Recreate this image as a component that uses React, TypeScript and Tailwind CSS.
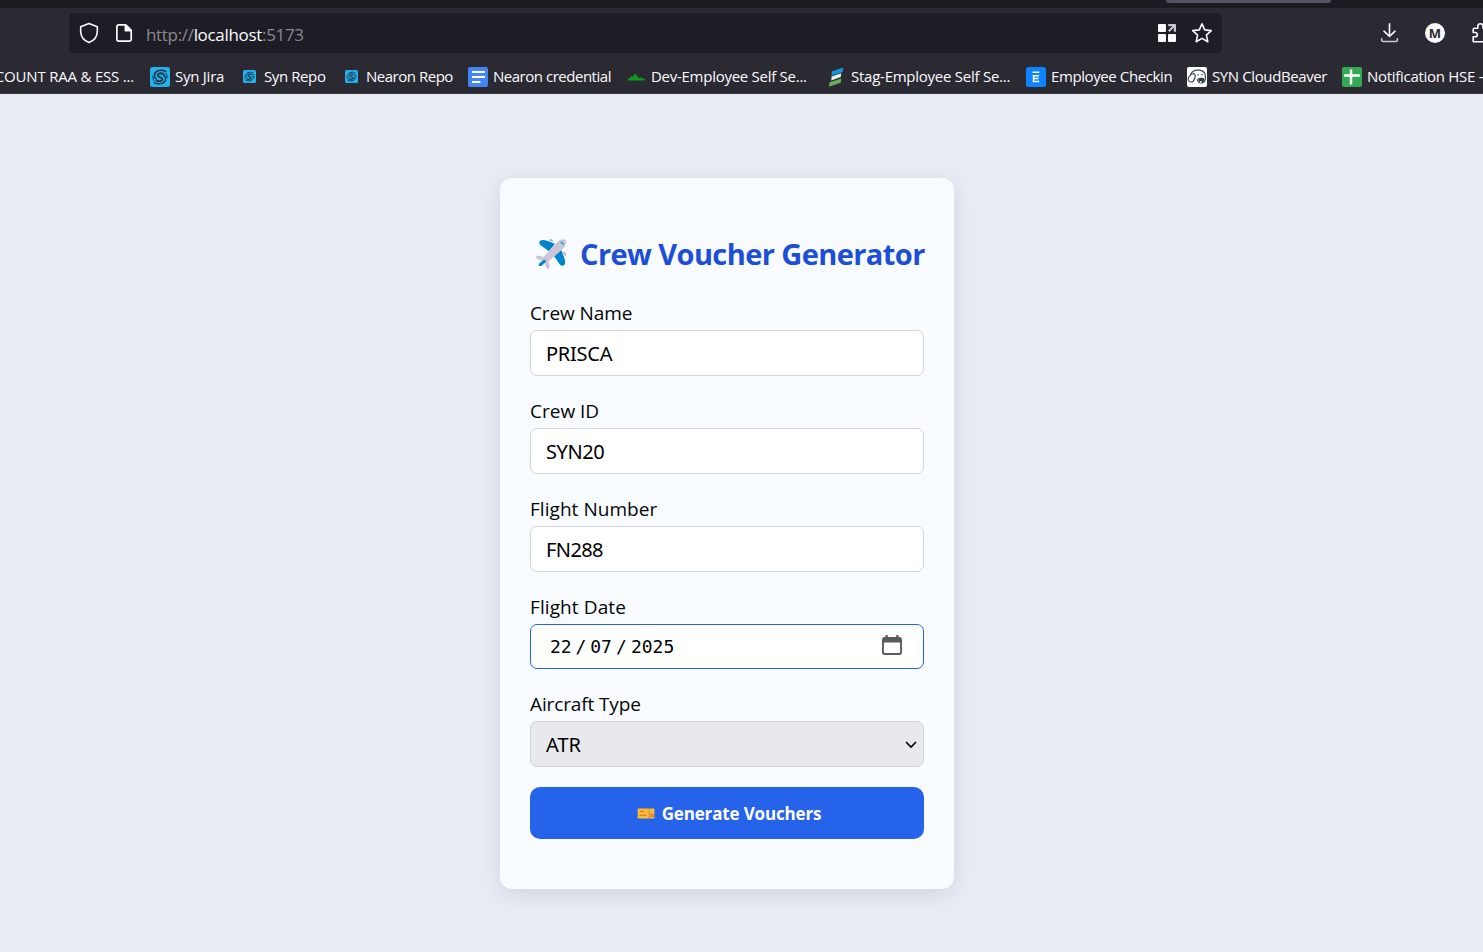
import type { ReactNode } from 'react';

function SwirlIcon({ className }: { className: string }) {
  return (
    <svg viewBox="0 0 20 20" className={className}>
      <rect width="20" height="20" rx="2.5" fill="#25b0ea" />
      <g fill="none" stroke="#17384c" strokeLinecap="round">
        <path d="M13.400 6.900C11 5.800 7.700 6.300 7.500 8.200c-.2 1.900 5 1.900 5 4.100 0 2-3.600 2.500-6 1.400" strokeWidth="1.900" />
        <path d="M15.800 4.700C12 2.300 5.800 3.200 4.500 7.300c-.6 2.200.2 3.800 1.900 4.900" strokeWidth="1.500" />
        <path d="M4.200 15.500c3.800 2.400 10 1.500 11.300-2.600.6-2.200-.2-3.800-1.900-4.900" strokeWidth="1.500" />
        <path d="M2.800 9.500c-.2 2 .4 3.400 1.500 4.300M17.200 10.700c.2-2-.4-3.400-1.500-4.300" strokeWidth="1" />
      </g>
    </svg>
  );
}

function DocsIcon() {
  return (
    <svg viewBox="0 0 20 20" className="size-5">
      <rect width="20" height="20" rx="2" fill="#4285f4" />
      <path d="M4 5h13M4 10h13M4 15h8.500" stroke="#fff" strokeWidth="2.200" />
    </svg>
  );
}

function HillIcon() {
  return (
    <svg viewBox="0 0 20 20" className="size-5">
      <path d="M1 13.500 5 9.300l1.800.5L9.200 6.400l3.800 4.800 1.600-1 2.800 1.400 1.600.6v1.300z" fill="#0c9a1c" />
    </svg>
  );
}

function StripesIcon() {
  return (
    <svg viewBox="0 0 20 20" className="size-5">
      <path d="M6 4.300 17.300.4 16.800 5 5.400 8.700z" fill="#1296db" />
      <path d="m5.600 9.400 9.600-3.200-.4 3.900-9.600 3.300z" fill="#e8f0f0" />
      <path d="M3.600 15.200 15.300 11.400l-.5 4.300L3 19.800z" fill="#62b152" />
    </svg>
  );
}

function LetterEIcon() {
  return (
    <svg viewBox="0 0 20 20" className="size-5">
      <rect width="20" height="20" rx="2.500" fill="#0a85ff" />
      <path d="M6.500 5.200h6.800M7.600 8.500v6M6.600 8.800h6.500M7 11.500h5.500M6.600 14.500h6.700" stroke="#fff" strokeWidth="1.500" fill="none" />
    </svg>
  );
}

function BeaverIcon() {
  return (
    <svg viewBox="0 0 20 20" className="size-5">
      <rect width="20" height="20" rx="2" fill="#fff" />
      <g fill="none" stroke="#34495a" strokeWidth="1.200" strokeLinecap="round">
        <path d="M3.500 7.500C5 4 9 2.800 12.500 3.200c4 .5 6 3.500 6 7 0 3-1.500 5.500-4 5.800-2 .2-4-1.500-4.200-3.500" />
        <path d="M6.500 6.500c2 .5 2 3 1.200 5-.8 2.300-2.200 3.700-4.200 3.500-2.500-.3-2.800-3.500-1.500-5.500.9-1.400 2.500-2.500 4.500-3" />
      </g>
      <path d="M11 11.500c1.500-1 5-1 6.500.3l-.8 3.200c-1 1.800-4 1.600-4.700-.2z" fill="#2c3e50" />
      <path d="M12.600 14.200h2.200v1.600h-1.800z" fill="#fff" />
      <circle cx="11" cy="7.800" r=".8" fill="#34495a" />
      <circle cx="15" cy="7.500" r=".8" fill="#34495a" />
    </svg>
  );
}

function SheetsIcon() {
  return (
    <svg viewBox="0 0 20 20" className="size-5">
      <rect width="20" height="20" rx="2" fill="#34a853" />
      <path d="M9 2.500v15M2.200 8.500h15.600" stroke="#fff" strokeWidth="2.500" />
    </svg>
  );
}

function Bookmark({ icon, label, box, text }: { icon: ReactNode; label: string; box: string; text: string }) {
  return (
    <div className={`flex h-6 shrink-0 items-center gap-[5px] ${box}`}>
      <span className="flex size-5 shrink-0 items-center justify-center">{icon}</span>
      <span className={`whitespace-nowrap pb-[2px] text-[15px] leading-[22px] ${text}`}>{label}</span>
    </div>
  );
}

function BrowserChrome() {
  return (
    <header className="flex h-[94px] flex-col overflow-hidden border-b border-[#3b3940] bg-[#2b2a33] text-[#fbfbfe]">
      <div className="flex h-2 shrink-0 bg-[#1c1b22] pl-[1166px]">
        <div className="h-[3px] w-[165px] rounded-b-[3px] bg-[#545361]" />
      </div>
      <div className="flex h-[50px] shrink-0 items-center pl-[69px]">
        <div className="flex h-10 w-[1153px] shrink-0 items-center rounded-[5px] bg-[#1e1d25] px-[9px]">
          <svg viewBox="0 0 22 22" className="size-[22px]" fill="none" stroke="#fbfbfe" strokeWidth="1.600" strokeLinejoin="round">
            <path d="M11 1.500 19.300 4.800v4.600c0 5-3.300 9-8.300 11.100C6 18.400 2.700 14.400 2.700 9.400V4.800z" />
          </svg>
          <svg viewBox="0 0 20 20" className="ml-[14px] size-5" fill="none" stroke="#fbfbfe" strokeWidth="1.700" strokeLinejoin="round">
            <path d="M4.500 1.900h7.200l5.500 5.400v9.200c0 .9-.7 1.600-1.600 1.600H4.500c-.9 0-1.600-.7-1.600-1.600v-13c0-.9.700-1.600 1.600-1.600z" />
            <path d="M11.400 2v5.600h5.600z" fill="#fbfbfe" />
          </svg>
          <div className="ml-3 flex items-center whitespace-pre pt-[3px] text-[17px] leading-6 tracking-[-0.32px] text-[#8a8990]">
            <span>http://</span>
            <span className="text-[#fbfbfe]">localhost</span>
            <span>:5173</span>
          </div>
          <svg viewBox="0 0 20 20" className="ml-auto size-5" fill="#fbfbfe">
            <rect x="1" y="1" width="8" height="8" rx="1" />
            <rect x="1" y="11" width="8" height="8" rx="1" />
            <rect x="11" y="11" width="8" height="8" rx="1" />
            <path d="M11.200 1H18c.6 0 1 .4 1 1v6.800h-2.200V4.700l-4.300 4.200-1.500-1.500 4.200-4.200h-4z" fill="#c6c6cc" />
          </svg>
          <svg viewBox="0 0 22 22" className="ml-[14px] size-[22px]" fill="none" stroke="#fbfbfe" strokeWidth="1.600" strokeLinejoin="round">
            <path d="m11 1.800 2.700 6.100 6.600.7-4.900 4.500 1.400 6.600-5.800-3.300-5.800 3.300 1.400-6.600L1.700 8.600l6.600-.7z" />
          </svg>
        </div>
        <svg viewBox="0 0 20 20" className="ml-[158px] size-5 shrink-0" fill="none" stroke="#fbfbfe" strokeWidth="1.600" strokeLinecap="round" strokeLinejoin="round">
          <path d="M9.500.9v12.400M4 8.200l5.500 5.300L15 8.200" />
          <path d="M1.700 15.800v1.200c0 .9.700 1.500 1.500 1.500h12.600c.9 0 1.600-.6 1.600-1.500v-1.200" stroke="#c9c9cf" />
        </svg>
        <div className="ml-[25px] flex size-5 shrink-0 items-center justify-center rounded-full bg-[#fbfbfe] text-[13px] font-bold leading-none text-[#2b2a33]">
          M
        </div>
        <svg viewBox="0 0 22 22" className="ml-[26px] size-[22px] shrink-0" fill="none" stroke="#fbfbfe" strokeWidth="1.600" strokeLinejoin="round">
          <path d="M2.200 19.500v-4.700h1.900c3 0 3-4.300 0-4.300H2.200V7.600c0-.8.600-1.400 1.400-1.400h3.200V4.400c0-3.600 5.200-3.600 5.200 0v1.800h4.200v13.600H2.600z" />
        </svg>
      </div>
      <div className="flex h-9 shrink-0 items-center pt-[1px]">
        <div className="flex h-6 w-[150px] shrink-0 justify-end overflow-hidden whitespace-nowrap pr-4 text-[15px] leading-[22px] tracking-[-0.2px]">
          COUNT RAA &amp; ESS ...
        </div>
        <Bookmark icon={<SwirlIcon className="size-5" />} label="Syn Jira" box="w-[89px]" text="tracking-[-0.25px]" />
        <Bookmark icon={<SwirlIcon className="size-[13px]" />} label="Syn Repo" box="w-[102px]" text="tracking-[-0.4px]" />
        <Bookmark icon={<SwirlIcon className="size-[13px]" />} label="Nearon Repo" box="w-[127px]" text="tracking-[-0.48px]" />
        <Bookmark icon={<DocsIcon />} label="Nearon credential" box="w-[158px]" text="tracking-[-0.48px]" />
        <Bookmark icon={<HillIcon />} label="Dev-Employee Self Se..." box="w-[200px]" text="tracking-[-0.27px]" />
        <Bookmark icon={<StripesIcon />} label="Stag-Employee Self Se..." box="w-[200px]" text="tracking-[-0.25px]" />
        <Bookmark icon={<LetterEIcon />} label="Employee Checkin" box="w-[161px]" text="tracking-[-0.4px]" />
        <Bookmark icon={<BeaverIcon />} label="SYN CloudBeaver" box="w-[155px]" text="tracking-[-0.39px]" />
        <Bookmark icon={<SheetsIcon />} label="Notification HSE -" box="w-[141px]" text="tracking-[-0.29px]" />
      </div>
    </header>
  );
}

function PlaneIcon() {
  return (
    <svg viewBox="0 0 32 32" className="ml-[5px] size-8 shrink-0">
      <path d="M5 2.800c2-1.400 4.200-.9 7-.1l8 3-6 7.500L5.600 7.200c-1.500-1-1.800-3.400-.6-4.400z" fill="#0084ce" />
      <path d="M29.300 27c1.400-2 .9-4.200.1-7l-3-8-7.500 6 6 8.400c1 1.500 3.400 1.800 4.400.6z" fill="#0084ce" />
      <path d="M14.500 2.300c1.300-.8 2.600-.2 2.900 1.400M29.800 17.500c.8-1.300.2-2.600-1.400-2.900" stroke="#998ea4" strokeWidth="1.200" fill="none" />
      <path d="M1.200 18.600c1-1.300 2.800-1 7.300.5L21 5.500C24.500 1.500 28.500.6 30.300 1.900c1.700 1.600.9 5.700-3 9.300L13.500 23.600c1.500 4 1.500 5.800.3 6.900-.6.600-1.600.4-2.100-.5l-2.900-6.200-6.900-3.100c-.9-.5-1.200-1.400-.7-2.100z" fill="#cdc4d6" />
      <path d="M25.200 4.200c1-.7 1.800-.3 2.700.4.800.8 1.100 1.700.6 2.700z" fill="#00a6ed" />
      <path d="M4.300 25.300 8.500 22c1.700-.9 2.900.2 2 1.900l-3.300 3.300c-.9.800-2.100 1-3.200.8-.2-.9-.3-2 .3-2.700z" fill="#0084ce" />
    </svg>
  );
}

function TicketIcon() {
  return (
    <svg viewBox="0 0 18 11" className="h-[11px] w-[18px] shrink-0">
      <path d="M1.500.5h15c.6 0 1 .4 1 1v8c0 .6-.4 1-1 1h-15c-.6 0-1-.4-1-1v-8c0-.6.400-1 1-1z" fill="#fcb932" />
      <path d="M0 3.500h.9v1H0zM0 6.500h.9v1H0zM17.200 3.500h.8v1h-.8zM17.200 6.500h.8v1h-.8z" fill="#2563eb" />
      <path d="M3 3.300h4M2.500 7.300h7M14 6.300h2.500v2H14z" stroke="#d67d3e" strokeWidth="1.200" fill="none" />
      <path d="M12.200.8v9.400" stroke="#9a7248" strokeWidth=".9" strokeDasharray="1.500 1" />
    </svg>
  );
}

function Field({ label, text = '', children }: { label: string; text?: string; children: ReactNode }) {
  return (
    <label className="flex flex-col gap-1">
      <span className={`h-[26px] text-[19px] leading-[26px] text-[#050505] ${text}`}>{label}</span>
      {children}
    </label>
  );
}

function TextInput({ value, tracking }: { value: string; tracking: string }) {
  return (
    <input
      defaultValue={value}
      className={`h-[46px] w-full rounded-[7px] border border-[#d1d5db] bg-white pl-[15px] pr-[14px] pt-[1px] font-['Noto_Sans','Open_Sans',sans-serif] text-[20px] text-black outline-none ${tracking}`}
    />
  );
}

export default function App() {
  return (
    <div className="flex h-[952px] w-full flex-col overflow-hidden bg-[#e8ecf5] font-['Open_Sans','Noto_Sans',sans-serif]">
      <BrowserChrome />
      <main className="flex flex-1 items-start pl-[500px] pt-[84px]">
        <form className="flex h-[711px] w-[454px] flex-col rounded-xl bg-[#f8fbff] px-[30px] pt-[56px] shadow-[0_5px_25px_rgba(0,0,0,0.1)]">
          <h1 className="flex h-10 items-center whitespace-nowrap text-[29px] font-bold leading-10 tracking-[-0.58px] text-[#1d4ed8]">
            <PlaneIcon />
            <span className="ml-[13px]">Crew Voucher Generator</span>
          </h1>
          <div className="mt-[26px] flex flex-col gap-[22px]">
            <Field label="Crew Name" text="tracking-[-0.1px]">
              <TextInput value="PRISCA" tracking="tracking-[-0.25px]" />
            </Field>
            <Field label="Crew ID">
              <TextInput value="SYN20" tracking="tracking-[-0.4px]" />
            </Field>
            <Field label="Flight Number" text="tracking-[0.05px]">
              <TextInput value="FN288" tracking="tracking-[-0.6px]" />
            </Field>
            <Field label="Flight Date" text="tracking-[0.1px]">
              <div className="flex h-[45px] items-center rounded-[7px] border border-[#2563eb] bg-white pl-[19px] pr-5 font-['DejaVu_Sans_Mono',monospace] text-[18px] text-black">
                <span>22</span>
                <span className="w-[18.500px] text-center">/</span>
                <span>07</span>
                <span className="w-[19px] text-center">/</span>
                <span>2025</span>
                <svg viewBox="0 0 22 22" className="mb-[3px] ml-auto size-[22px]" fill="#5b5b5b">
                  <path d="M4.500 1h2.300v2h8.400V1h2.300v2h1C19.900 3 21 4.100 21 5.500v13c0 1.400-1.100 2.500-2.500 2.500h-15C2.100 21 1 19.900 1 18.500v-13C1 4.100 2.100 3 3.500 3h1zM2.900 8.500v9.800c0 .5.400.8.900.8h14.400c.5 0 .9-.3.9-.8V8.500z" fillRule="evenodd" />
                </svg>
              </div>
            </Field>
            <Field label="Aircraft Type" text="tracking-[-0.12px]">
              <div className="flex h-[46px] items-center rounded-[7px] border border-[#d1d5db] bg-[#e9e8ed] pl-[15px] pr-[6px] pt-[1px] font-['Noto_Sans','Open_Sans',sans-serif] text-[20px] text-black">
                <span>ATR</span>
                <svg viewBox="0 0 12 8" className="ml-auto h-2 w-3" fill="none" stroke="#0b0b10" strokeWidth="1.700" strokeLinecap="round" strokeLinejoin="round">
                  <path d="m1.500 1.500 4.500 4.700 4.500-4.700" />
                </svg>
              </div>
            </Field>
          </div>
          <button type="button" className="mt-5 flex h-[52px] w-full items-center justify-center gap-[7px] rounded-[10px] bg-[#2563eb] pl-1 pt-[1px] text-[17px] font-bold tracking-[-0.15px] text-white">
            <TicketIcon />
            <span className="pt-[1px]">Generate Vouchers</span>
          </button>
        </form>
      </main>
    </div>
  );
}
